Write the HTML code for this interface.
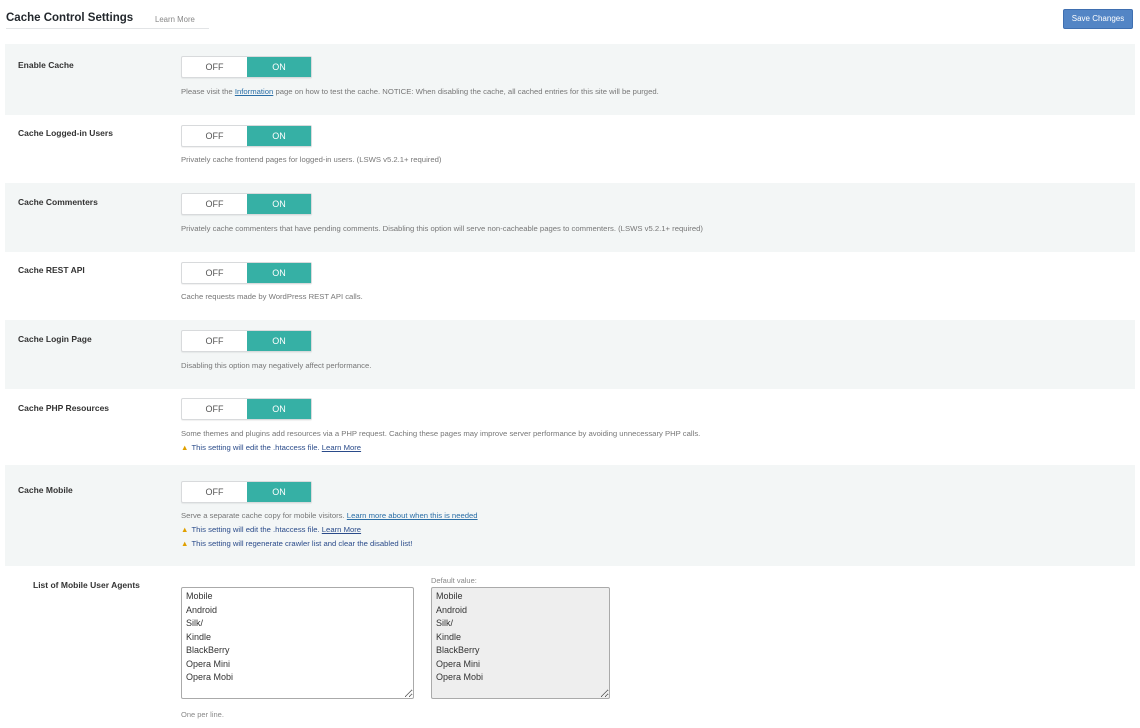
<!DOCTYPE html>
<html><head><meta charset="utf-8"><style>
*{box-sizing:border-box;margin:0;padding:0}
body{width:1140px;height:728px;background:#fff;font-family:"Liberation Sans",sans-serif;color:#23282d;position:relative;overflow:hidden}
.abs{position:absolute}
.title{left:6px;top:12px;font-size:11.5px;font-weight:bold;color:#23282d}
.lm{left:155px;top:15px;font-size:7.8px;color:#888}
.uline{left:6px;top:28px;width:203px;height:1px;background:#e2e4e6}
.save{left:1063px;top:9px;width:70px;height:20px;background:#5385c5;border:1px solid #3f6fb0;border-radius:2px;color:#fff;font-size:8px;text-align:center;line-height:18px}
.row{position:absolute;left:5px;width:1130px}
.shade{background:#f3f6f6}
.lab{position:absolute;left:13px;font-size:8.5px;font-weight:bold;color:#333}
.tog{position:absolute;left:176px;width:131px;height:22px;border:1px solid #d8dadc;border-radius:2px;background:#fff;font-size:9px;display:flex;box-shadow:0 1px 1px rgba(0,0,0,.06)}
.tog .off{width:65px;text-align:center;line-height:20px;color:#555}
.tog .on{flex:1;background:#36b0a5;color:#fff;text-align:center;line-height:20px}
.desc{position:absolute;left:176px;font-size:7.7px;color:#777;white-space:nowrap}
.desc a{color:#2a6ea6;text-decoration:underline}
.warn{position:absolute;left:176px;font-size:7.7px;color:#2a4b8a;white-space:nowrap}
.warn a{color:#2a4b8a;text-decoration:underline}
.warn b{color:#e0a000;font-size:7.5px;margin-right:3px}
textarea{position:absolute;font-family:"Liberation Sans",sans-serif;font-size:9px;line-height:13.5px;padding:2px 4px;border:1px solid #aaa;border-radius:2px;resize:both;color:#333}
</style></head><body>
<div class="abs title">Cache Control Settings</div>
<div class="abs lm">Learn More</div>
<div class="abs uline"></div>
<div class="abs save">Save Changes</div>

<div class="row shade" style="top:44px;height:71px">
<div class="lab" style="top:16px">Enable Cache</div>
<div class="tog" style="top:12px"><div class="off">OFF</div><div class="on">ON</div></div>
<div class="desc" style="top:43px">Please visit the <a>Information</a> page on how to test the cache. NOTICE: When disabling the cache, all cached entries for this site will be purged.</div>
</div>
<div class="row" style="top:115px;height:68px">
<div class="lab" style="top:13px">Cache Logged-in Users</div>
<div class="tog" style="top:10px"><div class="off">OFF</div><div class="on">ON</div></div>
<div class="desc" style="top:40px">Privately cache frontend pages for logged-in users. (LSWS v5.2.1+ required)</div>
</div>
<div class="row shade" style="top:183px;height:69px">
<div class="lab" style="top:14px">Cache Commenters</div>
<div class="tog" style="top:10px"><div class="off">OFF</div><div class="on">ON</div></div>
<div class="desc" style="top:41px">Privately cache commenters that have pending comments. Disabling this option will serve non-cacheable pages to commenters. (LSWS v5.2.1+ required)</div>
</div>
<div class="row" style="top:252px;height:68px">
<div class="lab" style="top:13px">Cache REST API</div>
<div class="tog" style="top:10px"><div class="off">OFF</div><div class="on">ON</div></div>
<div class="desc" style="top:40px">Cache requests made by WordPress REST API calls.</div>
</div>
<div class="row shade" style="top:320px;height:69px">
<div class="lab" style="top:14px">Cache Login Page</div>
<div class="tog" style="top:10px"><div class="off">OFF</div><div class="on">ON</div></div>
<div class="desc" style="top:41px">Disabling this option may negatively affect performance.</div>
</div>
<div class="row" style="top:389px;height:76px">
<div class="lab" style="top:14px">Cache PHP Resources</div>
<div class="tog" style="top:9px"><div class="off">OFF</div><div class="on">ON</div></div>
<div class="desc" style="top:40px">Some themes and plugins add resources via a PHP request. Caching these pages may improve server performance by avoiding unnecessary PHP calls.</div>
<div class="warn" style="top:54px"><b>▲</b>This setting will edit the .htaccess file. <a>Learn More</a></div>
</div>
<div class="row shade" style="top:465px;height:101px">
<div class="lab" style="top:20px">Cache Mobile</div>
<div class="tog" style="top:16px"><div class="off">OFF</div><div class="on">ON</div></div>
<div class="desc" style="top:46px">Serve a separate cache copy for mobile visitors. <a>Learn more about when this is needed</a></div>
<div class="warn" style="top:60px"><b>▲</b>This setting will edit the .htaccess file. <a>Learn More</a></div>
<div class="warn" style="top:74px"><b>▲</b>This setting will regenerate crawler list and clear the disabled list!</div>
</div>

<div class="abs" style="left:33px;top:580px;font-size:8.5px;font-weight:bold;color:#333">List of Mobile User Agents</div>
<textarea style="left:181px;top:587px;width:233px;height:112px;background:#fff">Mobile
Android
Silk/
Kindle
BlackBerry
Opera Mini
Opera Mobi</textarea>
<div class="abs" style="left:431px;top:576px;font-size:7.5px;color:#888">Default value:</div>
<textarea style="left:431px;top:587px;width:179px;height:112px;background:#eee">Mobile
Android
Silk/
Kindle
BlackBerry
Opera Mini
Opera Mobi</textarea>
<div class="abs" style="left:181px;top:710px;font-size:7.5px;color:#888">One per line.</div>
</body></html>
